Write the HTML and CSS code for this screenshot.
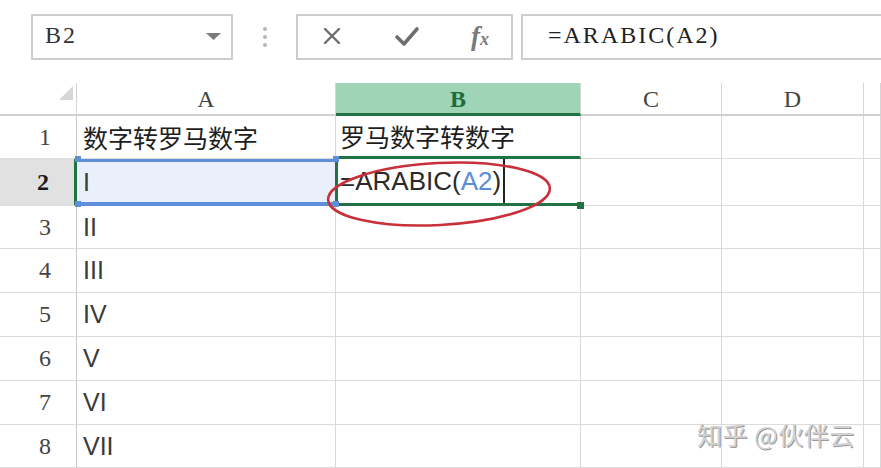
FILE: index.html
```html
<!DOCTYPE html>
<html lang="zh">
<head>
<meta charset="utf-8">
<title>ARABIC</title>
<link rel="stylesheet" href="styles.css">
</head>
<body>
<div class="app">
  <div class="toolbar">
    <div class="namebox">
      <span class="mono">B2</span>
      <svg class="caret" width="15" height="7" viewBox="0 0 15 7"><polygon points="0,0 15,0 7.5,7" fill="#7a7a7a"/></svg>
    </div>
    <div class="dots"><i></i><i></i><i></i></div>
    <div class="btnbox">
      <svg class="ico" width="20" height="18" viewBox="0 0 20 18"><path d="M3 2 L17 16 M17 2 L3 16" stroke="#6e6e6e" stroke-width="2.4" fill="none" stroke-linecap="round"/></svg>
      <svg class="ico chk" width="26" height="22" viewBox="0 0 26 22"><path d="M3 11 L10 18 L23 3" stroke="#6e6e6e" stroke-width="3.6" fill="none" stroke-linecap="round" stroke-linejoin="round"/></svg>
      <span class="fx"><span class="f">f</span><span class="x">x</span></span>
    </div>
    <div class="formula"><span class="mono">=ARABIC(A2)</span></div>
  </div>

  <div class="sheet">
    <div class="grid">
      <div class="hd corner"><svg width="14" height="14" viewBox="0 0 14 14"><polygon points="14,0 14,14 0,14" fill="#d6d6d6"/></svg></div>
      <div class="hd col">A</div>
      <div class="hd col sel">B</div>
      <div class="hd col">C</div>
      <div class="hd col">D</div>
      <div class="hd col"></div>

      <div class="hd row">1</div>
      <div class="c">数字转罗马数字</div>
      <div class="c b1">罗马数字转数字</div>
      <div class="c"></div><div class="c"></div><div class="c"></div>

      <div class="hd row rsel">2</div>
      <div class="c a2 lat">I</div>
      <div class="c b2 lat">=ARABIC(<span class="ref">A2</span>)<span class="cursor"></span></div>
      <div class="c"></div><div class="c"></div><div class="c"></div>

      <div class="hd row">3</div>
      <div class="c lat">II</div>
      <div class="c"></div><div class="c"></div><div class="c"></div><div class="c"></div>

      <div class="hd row">4</div>
      <div class="c lat">III</div>
      <div class="c"></div><div class="c"></div><div class="c"></div><div class="c"></div>

      <div class="hd row">5</div>
      <div class="c lat">IV</div>
      <div class="c"></div><div class="c"></div><div class="c"></div><div class="c"></div>

      <div class="hd row">6</div>
      <div class="c lat">V</div>
      <div class="c"></div><div class="c"></div><div class="c"></div><div class="c"></div>

      <div class="hd row">7</div>
      <div class="c lat">VI</div>
      <div class="c"></div><div class="c"></div><div class="c"></div><div class="c"></div>

      <div class="hd row">8</div>
      <div class="c lat">VII</div>
      <div class="c"></div><div class="c"></div><div class="c"></div><div class="c"></div>
    </div>

    <i class="hnd h1"></i><i class="hnd h2"></i><i class="hnd h3"></i><i class="hnd h4"></i>
    <i class="fill"></i>
    <svg class="ellipse" width="600" height="160" viewBox="0 0 600 160"><ellipse cx="439" cy="111" rx="111" ry="31" transform="rotate(-3 439 111)" fill="none" stroke="#c8303a" stroke-width="2.6"/></svg>
    <div class="watermark">知乎 @伙伴云</div>
  </div>
</div>
</body>
</html>
```

FILE: styles.css
```css
* { box-sizing: border-box; }
html, body { margin: 0; padding: 0; background: #fff; }
body { width: 881px; height: 468px; overflow: hidden; font-family: "Liberation Sans", "Noto Sans CJK SC", sans-serif; color: #222; }

.app { display: flex; flex-direction: column; }

.toolbar { display: flex; padding: 14px 0 0 31px; height: 83px; align-items: flex-start; }
.mono { font-family: "Liberation Serif", serif; font-size: 24px; color: #333; letter-spacing: 2px; }
.namebox { width: 202px; height: 46px; border: 2px solid #cdcdcd; display: flex; align-items: center; justify-content: space-between; padding: 0 10px 3px 12px; }
.namebox .caret { margin-top: 2px; }
.dots { width: 63px; height: 46px; display: flex; flex-direction: column; align-items: center; justify-content: center; gap: 4px; }
.dots i { width: 4px; height: 4px; border-radius: 50%; background: #b5b5b5; display: block; }
.btnbox { width: 217px; height: 46px; border: 2px solid #cdcdcd; display: flex; align-items: center; padding: 0 22px 2px 24px; justify-content: space-between; }
.btnbox .chk { margin-top: 2px; }
.fx { font-family: "Liberation Serif", serif; font-style: italic; color: #7a7a7a; font-weight: bold; line-height: 1; }
.fx .f { font-size: 27px; }
.fx .x { font-size: 18px; }
.formula { flex: 1; margin-left: 8px; height: 46px; border: 2px solid #cdcdcd; border-right: none; display: flex; align-items: center; padding: 0 0 3px 25px; }
.formula .mono { color: #222; }

.sheet { position: relative; }
.grid { display: grid; grid-template-columns: 77px 259px 245px 141px 142px 17px; grid-template-rows: 33px 43px 47px 43px 44px 44px 44px 44px 43px; }
.hd { border-right: 1px solid #d5d5d5; border-bottom: 2px solid #d0d0d0; display: flex; align-items: center; justify-content: center; font-family: "Liberation Serif", serif; color: #444; }
.corner { justify-content: flex-end; align-items: flex-end; padding: 0 3px 14px 0; border-right: 1px solid #d5d5d5; }
.col { font-size: 24px; padding-top: 2px; }
.col.sel { background: #9fd4b6; border-bottom: 3px solid #217346; color: #1f6b40; font-weight: bold; }
.row { font-size: 24px; border-bottom: 1px solid #dcdcdc; border-right: 1px solid #c9c9c9; justify-content: flex-end; padding-right: 25px; }
.rsel { background: #e1e1e1; border-right: 3px solid #217346; color: #1b1b1b; font-weight: bold; }
.c { border-right: 1px solid #d8d8d8; border-bottom: 1px solid #dcdcdc; display: flex; align-items: center; padding-left: 6px; font-size: 25px; font-family: "Noto Sans CJK SC", "Liberation Sans", sans-serif; color: #1e1e1e; white-space: nowrap; }
.lat { font-family: "Liberation Sans", "Noto Sans CJK SC", sans-serif; font-size: 25px; color: #3a3a3a; }
.b1 { border-bottom: 3px solid #217346; padding-left: 4px; }
.a2 { background: #e9f0fb; box-shadow: inset 0 3px 0 #5f8fd8, inset 0 -3px 0 #5f8fd8; border-bottom: 1px solid #5f8fd8; }
.b2 { border-left: 3px solid #217346; border-bottom: 3px solid #217346; padding-left: 2px; margin-left: -1px; font-size: 26px; color: #2a2a2a; }
.ref { color: #5b8ed6; }
.cursor { display: inline-block; width: 2px; height: 44px; background: #222; margin-left: 2px; }

.hnd { position: absolute; width: 6px; height: 6px; background: #5f8fd8; }
.h1 { left: 75px; top: 73px; }
.h2 { left: 333px; top: 73px; }
.h3 { left: 75px; top: 118px; }
.h4 { left: 333px; top: 118px; }
.fill { position: absolute; width: 7px; height: 7px; background: #217346; left: 577px; top: 119px; }
.ellipse { position: absolute; left: 0; top: 0; pointer-events: none; }
.watermark { position: absolute; left: 697px; top: 333px; font-family: "Noto Sans CJK SC", sans-serif; font-size: 25px; color: #d2d2d2; text-shadow: 1px 1px 0 #9a9a9a; letter-spacing: 0.5px; }
```
